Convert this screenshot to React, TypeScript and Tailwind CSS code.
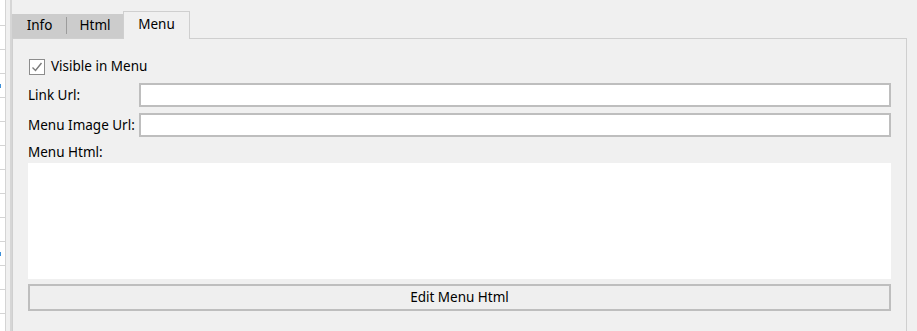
import React from "react";

const font = { fontFamily: '"Noto Sans", "Open Sans", sans-serif' };

export default function App() {
  const rows = Array.from({ length: 13 });
  return (
    <div
      className="w-[917px] h-[331px] bg-[#f0f0f0] flex overflow-hidden text-[13.5px] text-black"
      style={font}
    >
      {/* left strip */}
      <div className="w-[12px] h-full flex shrink-0">
        <div className="w-[6px] h-full bg-white border-r border-[#d4d4d4] flex flex-col pt-[25px]">
          {rows.map((_, i) => (
            <div key={i} className="h-[24px] shrink-0 border-t border-[#d4d4d4] relative">
              {(i === 2 || i === 9) && (
                <div className="absolute left-0 top-[10px] w-[1px] h-[4px] bg-[#3b8fd9]" />
              )}
            </div>
          ))}
        </div>
        <div className="w-[4px] h-full" />
        <div className="w-[2px] h-full bg-[#d6d6d6]" />
      </div>

      {/* main */}
      <div className="flex flex-col pt-[10px] w-[895px] shrink-0">
        {/* tabs */}
        <div className="flex items-end h-[28px] relative z-10">
          <div className="w-[55px] h-[24px] bg-[#cccccc] flex items-center justify-center relative">
            <span className="pb-[1px]">Info</span>
            <div className="absolute right-0 top-[3px] w-[1px] h-[17px] bg-[#9c9c9c]" />
          </div>
          <div className="w-[56px] h-[24px] bg-[#cccccc] flex items-center justify-center">
            <span className="pb-[1px]">Html</span>
          </div>
          <div className="w-[67px] h-[28px] bg-[#f0f0f0] border border-b-0 border-[#cfcfcf] flex items-center justify-center -mb-[1px]">
            <span className="pb-[2px]">Menu</span>
          </div>
        </div>
        {/* panel */}
        <div className="flex-1 border border-[#cfcfcf] border-b-0 pt-[20px] pl-[15px] pr-[15px] flex flex-col">
          <div className="h-[16px] flex items-center gap-[6px] pl-[1px]">
            <div className="w-[16px] h-[16px] border border-[#8c8c8c] bg-white flex items-center justify-center">
              <svg width="12" height="12" viewBox="0 0 12 12">
                <path d="M1.5 6.5 L4.5 9.5 L10.5 2" fill="none" stroke="#7a7a7a" strokeWidth="1.4" />
              </svg>
            </div>
            <span className="leading-none pb-[1px]">Visible in Menu</span>
          </div>
          <div className="mt-[8px] h-[24px] flex items-center">
            <span className="w-[111px] shrink-0">Link Url:</span>
            <div className="flex-1 h-[24px] bg-white border-2 border-[#bebebe]" />
          </div>
          <div className="mt-[6px] h-[24px] flex items-center">
            <span className="w-[111px] shrink-0">Menu Image Url:</span>
            <div className="flex-1 h-[24px] bg-white border-2 border-[#bebebe]" />
          </div>
          <div className="mt-[4px] h-[22px] flex items-center">
            <span>Menu Html:</span>
          </div>
          <div className="h-[116px] bg-white" />
          <div className="mt-[5px] h-[27px] bg-[#efefef] border-2 border-[#bebebe] flex items-center justify-center">
            <span className="pb-[1px]">Edit Menu Html</span>
          </div>
        </div>
      </div>
    </div>
  );
}
